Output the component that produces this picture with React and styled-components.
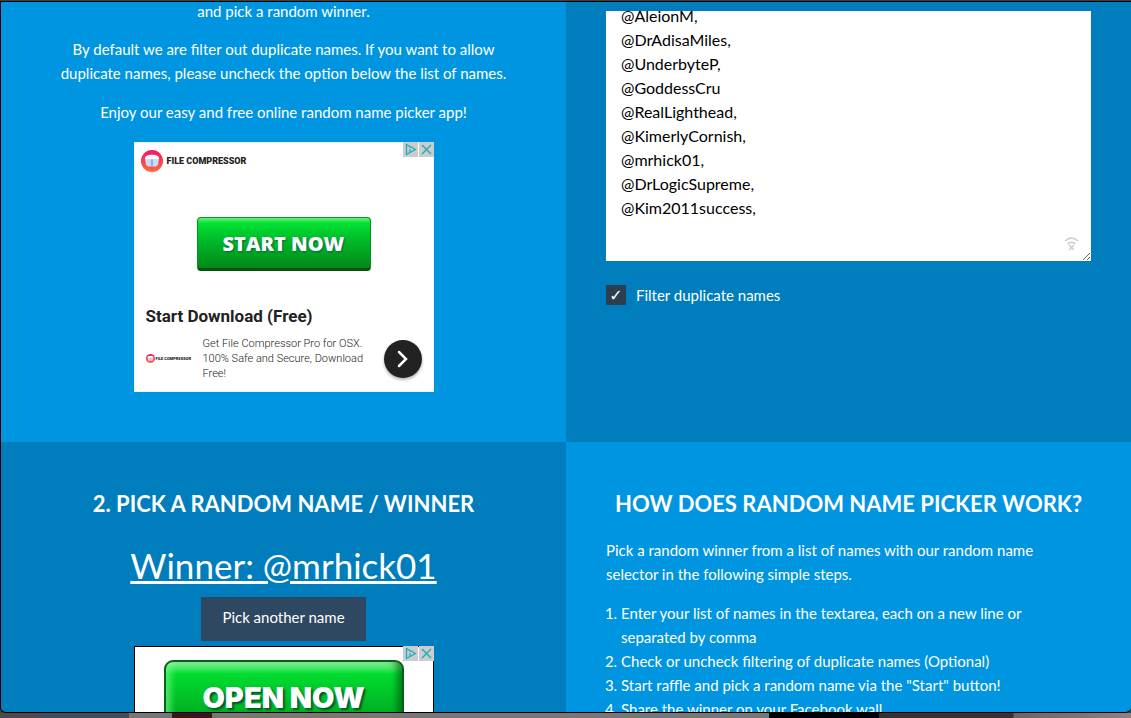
import React, { useEffect, useRef, useState } from "react";
import styled, { createGlobalStyle } from "styled-components";

const GlobalStyle = createGlobalStyle`
  * {
    box-sizing: border-box;
  }

  body {
    margin: 0;
    background: #777;
    color: #fff;
    font-family: Lato, "Liberation Sans", sans-serif;
    font-size: 15px;
    line-height: 24px;
  }
`;

const Desktop = styled.div`
  display: flex;
  flex-direction: column;
  height: 100vh;
  overflow: hidden;
  background: #3a3d42;
  padding-top: 1px;
`;

const Browser = styled.main`
  flex: 1;
  min-height: 0;
  display: grid;
  grid-template-columns: 1fr 1fr;
  grid-template-rows: auto auto;
  overflow: hidden;
  border: 1px solid #000;
  border-right: 0;
  border-radius: 0 0 6px 6px;
`;

const Backdrop = styled.div`
  flex: none;
  height: 5px;
  background: linear-gradient(
    to right,
    #4c4a4a 0 40px,
    #3e4f5c 40px 129px,
    #777 129px 172px,
    #3a1518 172px 212px,
    #777 212px 700px,
    #777 769px,
    #000 769px 879px,
    #333 879px 1013px,
    #666 1014px,
    #8a8282
  );
`;

const Panel = styled.section`
  padding: ${(props) => (props.$scrolled ? "0 40px 50px" : "50px 40px")};
  background: ${(props) => (props.$dark ? "#007dbc" : "#0095e0")};
  text-align: ${(props) => (props.$center ? "center" : "left")};
`;

const Text = styled.p`
  margin: 0 0 15px;
`;

const Lead = styled(Text)`
  line-height: 18px;
  margin-bottom: 17px;
`;

const Heading = styled.h2`
  margin: 0 0 23px;
  font-size: 22px;
  line-height: 23px;
  font-weight: 700;
  text-align: center;
  text-transform: uppercase;
`;

const Ad = styled.aside`
  position: relative;
  width: 300px;
  height: 250px;
  margin: ${(props) => (props.$framed ? "0 auto" : "18px auto 0")};
  background: #fff;
  border: 1px solid ${(props) => (props.$framed ? "#000" : "#e8f1f8")};
  color: #222;
  font-family: Roboto, sans-serif;
  text-align: left;
`;

const AdChoices = styled.div`
  position: absolute;
  top: -1px;
  right: -1px;
  display: flex;
  gap: 1px;
`;

const AdChoice = styled.button`
  display: flex;
  width: 15px;
  height: 15px;
  padding: 0;
  border: 0;
  background: #ccc;
`;

const AdBody = styled.div`
  display: flex;
  flex-direction: column;
  padding: 7px 11px 0 6px;
`;

const Brand = styled.div`
  display: flex;
  align-items: center;
  gap: 4px;
  color: #222;

  svg {
    flex: none;
  }
`;

const SmallBrand = styled(Brand)`
  width: 46px;
  gap: 1px;
`;

const Wordmark = styled.span`
  font-size: ${(props) => props.$size}px;
  line-height: 22px;
  font-weight: 900;
  white-space: nowrap;
`;

const GreenButton = styled.button`
  align-self: center;
  width: 174px;
  height: 54px;
  margin: 45px 0 32px 5px;
  padding: 0;
  border: 1px solid #0a8f25;
  border-bottom: 3px solid #06530f;
  border-radius: 4px;
  background: linear-gradient(#6cf27c, #00e233 5px, #00b526 50%, #008a17);
  color: #fff;
  font: 800 20px "Open Sans", sans-serif;
  text-shadow: 1px 1px 2px #064;
`;

const AdTitle = styled.h3`
  margin: 0 0 6px 5px;
  font-size: 17px;
  line-height: 27px;
  font-weight: 700;
`;

const AdFooter = styled.div`
  display: flex;
  align-items: center;
  justify-content: space-between;
  padding-left: 5px;
`;

const AdText = styled.p`
  width: 170px;
  margin: 0;
  font-size: 11px;
  line-height: 15px;
  font-weight: 300;
`;

const ArrowButton = styled.button`
  display: flex;
  align-items: center;
  justify-content: center;
  width: 38px;
  height: 38px;
  padding: 0;
  border: 0;
  border-radius: 50%;
  background: #222;
  box-shadow: 0 2px 3px rgba(0, 0, 0, 0.3);
`;

const OpenButton = styled.button`
  display: block;
  width: 240px;
  height: 74px;
  margin: 13px auto 0 29px;
  padding: 0;
  border: 2px solid #06601a;
  border-radius: 9px;
  background: linear-gradient(#8cf59b, #00dc2f 12px, #009a1c);
  box-shadow: inset 8px 0 6px -3px rgba(120, 255, 140, 0.6),
    inset -8px 0 6px -3px rgba(0, 80, 10, 0.6);
  color: #fff;
  font: 900 29px Inter, sans-serif;
  text-shadow: 2px 2px 2px #053;
`;

const NamesField = styled.div`
  position: relative;
  padding-top: 9px;
`;

const Names = styled.textarea`
  display: block;
  width: 100%;
  height: 250px;
  padding: 15px 15px 17px;
  border: 0;
  outline: 0;
  background: #fff;
  color: #000;
  font: inherit;
  font-size: 16px;
  resize: vertical;
  scrollbar-width: none;
`;

const OfflineBadge = styled.svg`
  position: absolute;
  right: 12px;
  bottom: 10px;
`;

const FilterLabel = styled.label`
  display: flex;
  align-items: center;
  gap: 10px;
  margin-top: 22px;
`;

const Checkbox = styled.input`
  appearance: none;
  display: grid;
  place-items: center;
  width: 20px;
  height: 20px;
  margin: 0;
  background: #2c3e50;

  &:checked::before {
    content: "✓";
    color: #fff;
    font: bold 16px "DejaVu Sans", sans-serif;
  }
`;

const Winner = styled.p`
  margin: 0 0 5px;
  font-size: 35px;
  line-height: 54px;
  text-decoration: underline;
`;

const PickButton = styled.button`
  display: block;
  height: 44px;
  margin: 0 auto 5px;
  padding: 0 21px 4px;
  border: 0;
  background: #2f4861;
  color: #fff;
  font: inherit;
`;

const Steps = styled.ol`
  margin: 0;
  padding-left: 15px;
`;

const NAMES = `@AleionM,
@DrAdisaMiles,
@UnderbyteP,
@GoddessCru
@RealLighthead,
@KimerlyCornish,
@mrhick01,
@DrLogicSupreme,
@Kim2011success,
`;

function AdCorner() {
  return (
    <AdChoices>
      <AdChoice aria-label="AdChoices">
        <svg width="15" height="15" fill="none" stroke="#15aebf" strokeWidth="1.3">
          <path d="M3.5 2.5v10l9-5z" strokeLinejoin="round" />
          <path d="M7 7v3.5M7 4.5v1.2" />
        </svg>
      </AdChoice>
      <AdChoice aria-label="Close ad">
        <svg width="15" height="15" stroke="#15aebf" strokeWidth="1.4">
          <path d="M3 3l9 9M12 3l-9 9" />
        </svg>
      </AdChoice>
    </AdChoices>
  );
}

function CompressorLogo({ size }) {
  return (
    <svg width={size} height={size} viewBox="0 0 22 22">
      <defs>
        <linearGradient id="disc" x1="0" y1="0" x2="0" y2="1">
          <stop offset="0" stopColor="#f5146b" />
          <stop offset="1" stopColor="#ff6a3c" />
        </linearGradient>
      </defs>
      <circle cx="11" cy="11" r="11" fill="url(#disc)" />
      <path d="M4 9q0-3 3-3.500 4-1.500 8 0 3 .5 3 3.500l-1 6-2 1.500H7L5 15z" fill="#c9dcf5" />
      <path d="M4 9q0-3 3-3.500 4-1.500 8 0 3 .5 3 3.500-4-1-7 1-3-2-7-1z" fill="#fff" />
      <path d="M11 9v7" stroke="#6f8fc4" strokeWidth="1.2" />
    </svg>
  );
}

function NameList() {
  const [names, setNames] = useState(NAMES);
  const field = useRef(null);

  // keep the end of the list in view
  useEffect(() => {
    field.current.scrollTop = field.current.scrollHeight;
  }, []);

  return (
    <NamesField>
      <Names
        ref={field}
        aria-label="List of names"
        spellCheck={false}
        value={names}
        onChange={(e) => setNames(e.target.value)}
      />
      <OfflineBadge width="15" height="15" fill="none" stroke="#ccc" strokeWidth="1.4">
        <path d="M1 5q6.500-6 13 0M3.500 8q4-3.500 8 0M5 9l5 5M10 9l-5 5" />
      </OfflineBadge>
    </NamesField>
  );
}

function App() {
  return (
    <Desktop>
      <GlobalStyle />
      <Browser>
        <Panel $center $scrolled>
          <Lead>and pick a random winner.</Lead>
          <Text>
            By default we are filter out duplicate names. If you want to allow
            <br />
            duplicate names, please uncheck the option below the list of names.
          </Text>
          <Text>Enjoy our easy and free online random name picker app!</Text>
          <Ad>
            <AdBody>
              <Brand>
                <CompressorLogo size={22} />
                <Wordmark $size={9}>FILE COMPRESSOR</Wordmark>
              </Brand>
              <GreenButton>START NOW</GreenButton>
              <AdTitle>Start Download (Free)</AdTitle>
              <AdFooter>
                <SmallBrand>
                  <CompressorLogo size={9} />
                  <Wordmark $size={4}>FILE COMPRESSOR</Wordmark>
                </SmallBrand>
                <AdText>
                  Get File Compressor Pro for OSX. 100% Safe and Secure, Download Free!
                </AdText>
                <ArrowButton aria-label="Open">
                  <svg width="16" height="20" fill="none" stroke="#fff" strokeWidth="2.5">
                    <path d="M4 3l7 7-7 7" strokeLinecap="round" />
                  </svg>
                </ArrowButton>
              </AdFooter>
            </AdBody>
            <AdCorner />
          </Ad>
        </Panel>

        <Panel $dark $scrolled>
          <NameList />
          <FilterLabel>
            <Checkbox type="checkbox" defaultChecked />
            Filter duplicate names
          </FilterLabel>
        </Panel>

        <Panel $dark $center>
          <Heading>2. Pick a random name / winner</Heading>
          <Winner>Winner: @mrhick01</Winner>
          <PickButton>Pick another name</PickButton>
          <Ad $framed>
            <OpenButton>OPEN NOW</OpenButton>
            <AdCorner />
          </Ad>
        </Panel>

        <Panel>
          <Heading>How does Random Name Picker work?</Heading>
          <Text>
            Pick a random winner from a list of names with our random name
            <br />
            selector in the following simple steps.
          </Text>
          <Steps>
            <li>
              Enter your list of names in the textarea, each on a new line or
              <br />
              separated by comma
            </li>
            <li>Check or uncheck filtering of duplicate names (Optional)</li>
            <li>Start raffle and pick a random name via the "Start" button!</li>
            <li>Share the winner on your Facebook wall</li>
          </Steps>
        </Panel>
      </Browser>
      <Backdrop />
    </Desktop>
  );
}

export default App;
